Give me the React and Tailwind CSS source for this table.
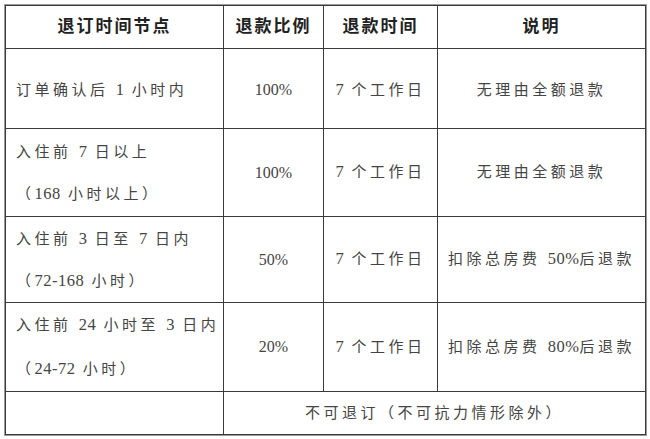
import React from "react";

const font = { fontFamily: '"Liberation Serif", "Noto Sans CJK SC", serif' };

function N({ children }) {
  return <span className="tracking-[0.5px] text-[16.5px]">{children}</span>;
}

export default function App() {
  const td = "border border-[#3a3a3a] text-[15px] text-[#444] tracking-[3.5px] align-middle";
  const th = "border border-[#3a3a3a] text-[17px] font-bold text-[#222] tracking-[2px] text-center align-middle";
  return (
    <div className="w-[650px] h-[439px] bg-white pl-[5px] pt-[5px]" style={font}>
      <table className="table-fixed border-collapse w-[640px] outline outline-1 outline-[#999]">
        <colgroup>
          <col className="w-[218px]" />
          <col className="w-[100px]" />
          <col className="w-[114px]" />
          <col className="w-[208px]" />
        </colgroup>
        <tbody>
          <tr className="h-[43px]">
            <td className={th}>退订时间节点</td>
            <td className={th}>退款比例</td>
            <td className={th}>退款时间</td>
            <td className={th}>说明</td>
          </tr>
          <tr className="h-[80px]">
            <td className={`${td} pl-[10px] pt-[3px]`}>订单确认后 <N>1</N> 小时内</td>
            <td className={`${td} text-center pt-[3px]`}><span className="tracking-normal text-[16px]">100%</span></td>
            <td className={`${td} text-center pt-[3px]`}><N>7</N> 个工作日</td>
            <td className={`${td} text-center pt-[3px]`}>无理由全额退款</td>
          </tr>
          <tr className="h-[88px]">
            <td className={`${td} pl-[10px] leading-[41px]`}>
              <div>入住前 <N>7</N> 日以上</div>
              <div>（<N>168</N> 小时以上）</div>
            </td>
            <td className={`${td} text-center`}><span className="tracking-normal text-[16px]">100%</span></td>
            <td className={`${td} text-center`}><N>7</N> 个工作日</td>
            <td className={`${td} text-center`}>无理由全额退款</td>
          </tr>
          <tr className="h-[86px]">
            <td className={`${td} pl-[10px] leading-[42px]`}>
              <div>入住前 <N>3</N> 日至 <N>7</N> 日内</div>
              <div>（<N>72-168</N> 小时）</div>
            </td>
            <td className={`${td} text-center`}><span className="tracking-normal text-[16px]">50%</span></td>
            <td className={`${td} text-center`}><N>7</N> 个工作日</td>
            <td className={`${td} text-center tracking-[2.5px]`}>扣除总房费 <N>50%</N>后退款</td>
          </tr>
          <tr className="h-[87px]">
            <td className={`${td} pl-[10px] leading-[44px]`}>
              <div>入住前 <N>24</N> 小时至 <N>3</N> 日内</div>
              <div>（<N>24-72</N> 小时）</div>
            </td>
            <td className={`${td} text-center`}><span className="tracking-normal text-[16px]">20%</span></td>
            <td className={`${td} text-center`}><N>7</N> 个工作日</td>
            <td className={`${td} text-center tracking-[2.5px]`}>扣除总房费 <N>80%</N>后退款</td>
          </tr>
          <tr className="h-[43px]">
            <td className={td}></td>
            <td colSpan={3} className={`${td} text-center`}>不可退订（不可抗力情形除外）</td>
          </tr>
        </tbody>
      </table>
    </div>
  );
}
